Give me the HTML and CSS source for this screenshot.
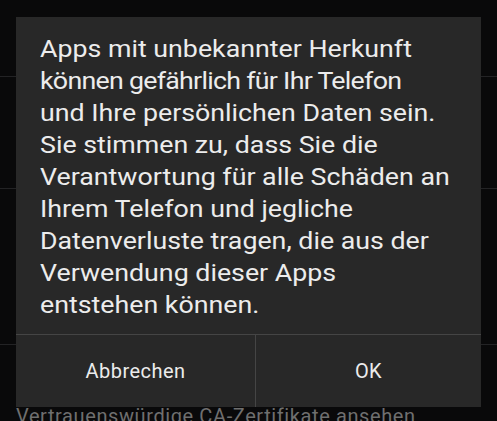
FILE: index.html
```html
<!DOCTYPE html>
<html lang="de">
<head>
<meta charset="utf-8">
<title>Unbekannte Herkunft</title>
<link rel="stylesheet" href="styles.css">
</head>
<body>
<div class="screen">
  <ul class="settings">
    <li class="row row-1"></li>
    <li class="row row-2"></li>
    <li class="row row-3"></li>
    <li class="row row-4"><span class="row-label">Vertrauenswürdige CA-Zertifikate ansehen</span></li>
  </ul>
  <div class="dialog">
    <div class="message"><p class="message-text">Apps mit unbekannter Herkunft<br><span class="tight">können gefährlich für Ihr Telefon</span><br>und Ihre persönlichen Daten sein.<br>Sie stimmen zu, dass Sie die<br>Verantwortung für alle Schäden an<br>Ihrem Telefon und jegliche<br>Datenverluste tragen, die aus der<br>Verwendung dieser Apps<br>entstehen können.</p></div>
    <div class="buttons">
      <button class="btn btn-cancel">Abbrechen</button>
      <button class="btn btn-ok">OK</button>
    </div>
  </div>
</div>
</body>
</html>
```
FILE: styles.css
```css
html, body {
  margin: 0;
  padding: 0;
  background: #09090a;
  overflow: hidden;
}
.screen {
  position: relative;
  width: 497px;
  height: 421px;
  overflow: hidden;
  font-family: Roboto, "Noto Sans", sans-serif;
}
.settings {
  list-style: none;
  margin: 0;
  padding: 0;
}
.row {
  border-bottom: 1px solid #232325;
}
.row-1 { height: 76px; }
.row-2 { height: 111px; }
.row-3 { height: 155px; }
.row-4 {
  border-bottom: none;
  padding: 59px 0 0 16px;
}
.row-label {
  font-size: 20px;
  letter-spacing: 0.6px;
  color: #6f6f6f;
  white-space: nowrap;
}
.dialog {
  position: absolute;
  left: 16px;
  top: 17px;
  width: 465px;
  background: #282828;
  display: flex;
  flex-direction: column;
}
.message {
  padding: 16px 20px 13px 24px;
  border-bottom: 1px solid #454545;
}
.message-text {
  display: inline-block;
  margin: 0;
  font-size: 24px;
  line-height: 32px;
  color: #ececec;
  white-space: nowrap;
  transform: scaleX(1.115);
  transform-origin: 0 0;
  vertical-align: top;
}
.tight {
  letter-spacing: -0.65px;
}
.buttons {
  display: grid;
  grid-template-columns: 240px 1fr;
  height: 72px;
}
.btn {
  background: transparent;
  border: none;
  margin: 0;
  padding: 0;
  font-family: Roboto, "Noto Sans", sans-serif;
  font-size: 20px;
  letter-spacing: 0.45px;
  color: #ececec;
}
.btn-cancel {
  border-right: 1px solid #454545;
}
```
